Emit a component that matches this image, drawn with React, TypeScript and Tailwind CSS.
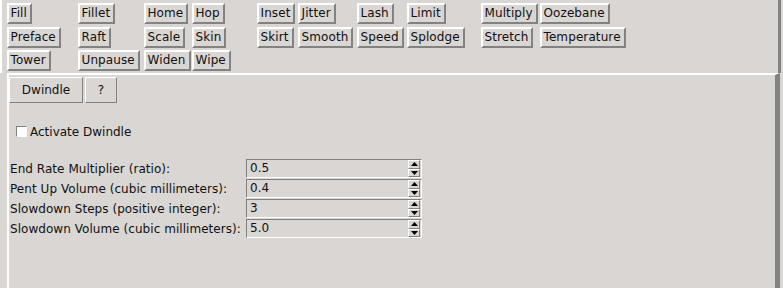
import React from "react";

const rows: (string | null)[][] = [
  ["Fill", "Fillet", "Home", "Hop", "Inset", "Jitter", "Lash", "Limit", "Multiply", "Oozebane"],
  ["Preface", "Raft", "Scale", "Skin", "Skirt", "Smooth", "Speed", "Splodge", "Stretch", "Temperature"],
  ["Tower", "Unpause", "Widen", "Wipe", null, null, null, null, null, null],
];

function TkButton({ label }: { label: string }) {
  return (
    <div className="h-[21px] w-fit border-2 border-t-white border-l-white border-b-[#828282] border-r-[#828282] pl-[1.5px] pr-[3px] leading-[17px] whitespace-nowrap tracking-[0.1px]">
      {label}
    </div>
  );
}

function Spin({ value }: { value: string }) {
  return (
    <div className="w-[176px] h-[19px] border border-t-[#828282] border-l-[#828282] border-b-white border-r-white flex items-stretch">
      <div className="flex-1 pl-[3px] leading-[17px]">{value}</div>
      <div className="w-[12px] flex flex-col mr-[1px]">
        <div className="flex-1 border border-t-white border-l-white border-b-[#828282] border-r-[#828282] flex items-center justify-center">
          <svg width="7" height="4" viewBox="0 0 7 4"><path d="M3.5 0 L7 4 L0 4 Z" fill="#000" /></svg>
        </div>
        <div className="flex-1 border border-t-white border-l-white border-b-[#828282] border-r-[#828282] flex items-center justify-center">
          <svg width="7" height="4" viewBox="0 0 7 4"><path d="M0 0 L7 0 L3.5 4 Z" fill="#000" /></svg>
        </div>
      </div>
    </div>
  );
}

const fields = [
  ["End Rate Multiplier (ratio):", "0.5"],
  ["Pent Up Volume (cubic millimeters):", "0.4"],
  ["Slowdown Steps (positive integer):", "3"],
  ["Slowdown Volume (cubic millimeters):", "5.0"],
];

export default function App() {
  return (
    <div className="w-[783px] h-[288px] bg-[#d9d6d3] overflow-hidden text-[12px] text-[#111] font-['DejaVu_Sans',sans-serif]">
      <div className="w-[781px] h-[73px] border-l-2 border-l-white border-r-[3px] border-r-[#828282] pt-[3px] pl-[5px]">
        <div className="grid grid-cols-[71px_66px_48px_65px_41px_59px_50px_74px_59px_auto] gap-y-[2.5px]">
          {rows.flat().map((b, i) => (
            <div key={i}>{b ? <TkButton label={b} /> : null}</div>
          ))}
        </div>
      </div>
      <div className="ml-[7px] w-[773px] h-[215px] border-l-2 border-t-2 border-l-white border-t-white border-r-[5px] border-r-[#828282]">
        <div className="flex pt-[2px]">
          <div className="w-[74px] h-[26px] border border-t-white border-l-white border-b-[#828282] border-r-[#828282] flex items-center justify-center">Dwindle</div>
          <div className="ml-[2px] w-[32px] h-[26px] border border-t-white border-l-white border-b-[#828282] border-r-[#828282] flex items-center justify-center">?</div>
        </div>
        <div className="flex items-center mt-[23px] ml-[7px] h-[11px]">
          <div className="w-[11px] h-[11px] bg-white border border-t-[#828282] border-l-[#828282] border-b-white border-r-white" />
          <span className="ml-[3px]">Activate Dwindle</span>
        </div>
        <div className="mt-[22px] flex flex-col gap-[1px] pl-[1px]">
          {fields.map(([l, v]) => (
            <div key={l} className="flex items-center h-[19px]">
              <div className="w-[236px] whitespace-nowrap tracking-[0.05px]">{l}</div>
              <Spin value={v} />
            </div>
          ))}
        </div>
      </div>
    </div>
  );
}
